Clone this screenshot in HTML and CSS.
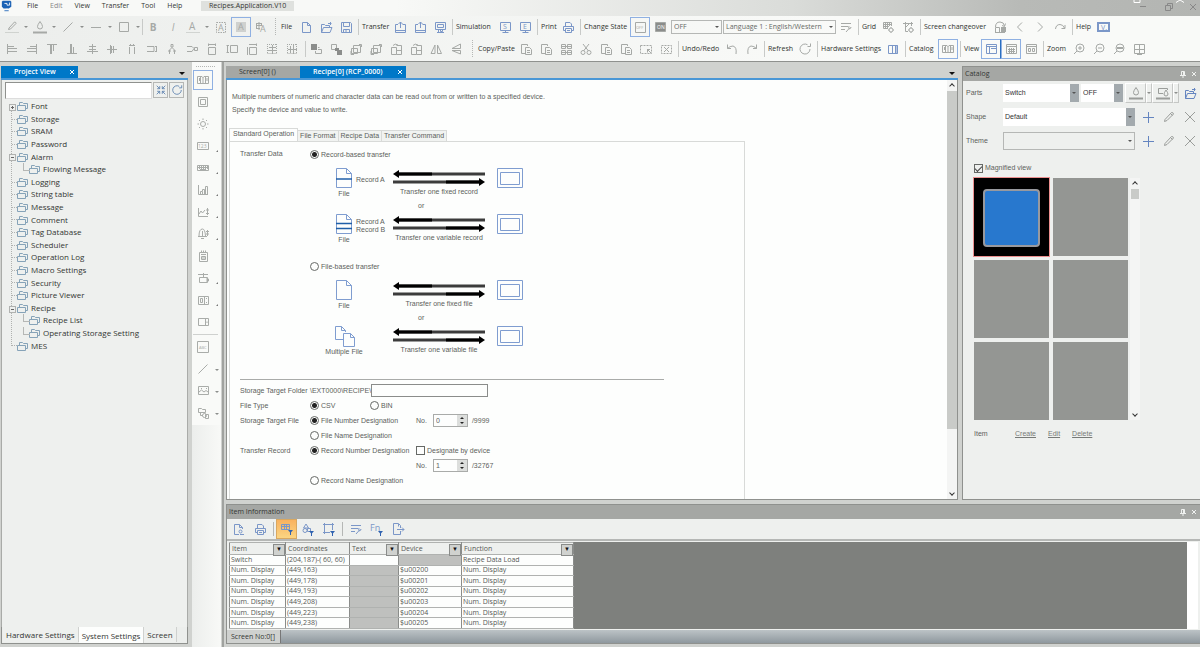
FILE: index.html
```
<!DOCTYPE html>
<html lang="en">
  <head>
    <meta charset="UTF-8" />
    <meta name="viewport" content="width=device-width, initial-scale=1.0" />
    <title>Recipes.Application.V10</title>
    <link rel="stylesheet" href="styles.css">
  </head>
  <body>
    <!-- icon sprite -->
    <svg class="sprite" aria-hidden="true">
      <symbol id="pencil" viewBox="0 0 14 14"><path d="M3 9.500L9.500 2.500Q11 2 11.500 4L5 10.500L2.500 11.500ZM8.500 3.500L10.500 5.500" /></symbol>
      <symbol id="pen" viewBox="0 0 14 14"><path d="M4 8L9.500 2Q11 2 11 3.500L5.500 9L3.500 9.500Z" /><path d="M0 12.500H14" opacity=".4" /></symbol>
      <symbol id="drop" viewBox="0 0 14 14"><path d="M7 1.500Q9.500 5 9.500 6.500Q9.500 9 7 9Q4.500 9 4.500 6.500Q4.500 5 7 1.500Z" /><path d="M-1 12.500H15" stroke-width="2" /></symbol>
      <symbol id="line" viewBox="0 0 14 14"><path d="M2.500 11.500L11.500 2.500" /></symbol>
      <symbol id="hline" viewBox="0 0 14 14"><path d="M2 7.500H12" /></symbol>
      <symbol id="square" viewBox="0 0 14 14"><path d="M2.500 2.500H11.500V11.500H2.500Z" /></symbol>
      <symbol id="font-a" viewBox="0 0 14 14"><text x="3" y="10" font-size="10">A</text><path d="M0 12.500H14" opacity=".4" /></symbol>
      <symbol id="dash-a" viewBox="0 0 14 14"><path d="M2.500 2.500H11.500V12.500H2.500Z" stroke-dasharray="1.500 1" /><text x="4" y="11" font-size="9">A</text></symbol>
      <symbol id="fill-a" viewBox="0 0 14 14"><path d="M2 2H12V12H2Z" fill="#cfd1cf" stroke="none" /><text x="4" y="10" font-size="9">A</text></symbol>
      <symbol id="lang-a" viewBox="0 0 14 14"><path d="M2 3.500H8M2 5.500H8M2 8.500H6M5 2V10M2.500 3V8M7.500 3V6" /><text x="6" y="12" font-size="9">A</text></symbol>
      <symbol id="page" viewBox="0 0 14 14"><path d="M3.500 2.500H8.500L11.500 5.500V12.500H3.500ZM8.500 2.500V5.500H11.500" /></symbol>
      <symbol id="open" viewBox="0 0 14 14"><path d="M2.500 12.500V4.500H5.500L6.500 5.500H10.500V7.500M2.500 12.500L4.500 7.500H13L11 12.500ZM9 3.500H12.500M11.500 2V5" /></symbol>
      <symbol id="save" viewBox="0 0 14 14"><path d="M2.500 2.500H11.500L12.500 3.500V12.500H2.500ZM4.500 2.500V6.500H10.500V2.500M4.500 12.500V9.500H10.500V12.500M7 10V12" /></symbol>
      <symbol id="pc-in" viewBox="0 0 14 14"><path d="M5 4.500H2.500V12.500H12.500V4.500H9.500M2.500 10.500H12.500M7.500 2V8M5.500 4L7.500 2L9.500 4" /></symbol>
      <symbol id="pc-link" viewBox="0 0 14 14"><path d="M2.500 2.500H12.500V9.500H2.500ZM4.500 4.500H10.500V7.500H4.500ZM5.500 9.500V12.500M7.500 9.500V11.500H9.500V9.500M4 12.500H11" /></symbol>
      <symbol id="sim" viewBox="0 0 14 14"><path d="M2.500 2.500H12.500V10.500H2.500ZM7.500 10.500V12.500M4.500 12.500H10.500" /><text x="5" y="9" font-size="7">S</text></symbol>
      <symbol id="emu" viewBox="0 0 14 14"><path d="M2.500 2.500H12.500V10.500H2.500ZM7.500 10.500V12.500M4.500 12.500H10.500" /><text x="5" y="9" font-size="7">E</text></symbol>
      <symbol id="print" viewBox="0 0 14 14"><path d="M4.500 6V2.500H9L10.500 4V6M4.500 10.500H2.500V6.500H12.500V10.500H10.500M4.500 8.500H10.500V12.500H4.500ZM6 10.500H9" /></symbol>
      <symbol id="off" viewBox="0 0 14 14"><path d="M2.500 2.500H12.500V12.500H2.500Z" /><text x="3" y="9" font-size="4">OFF</text></symbol>
      <symbol id="on" viewBox="0 0 14 14"><path d="M2.500 2.500H12.500V11.500H2.500Z" fill="#8b8d8b" /><text x="4" y="9" font-size="5" class="invert">ON</text></symbol>
      <symbol id="list-tool" viewBox="0 0 14 14"><path d="M2 3.500H12M2 6.500H9M2 9.500H6M7 12L11 7.500M10 6Q9 8 10.500 9Q12 8.500 12 7" /></symbol>
      <symbol id="grid-gear" viewBox="0 0 14 14"><path d="M2.500 2.500H10.500M2.500 4.500H10.500M2.500 6.500H8M2.500 8.500H7M2.500 2.500V8.500M4.500 2.500V8.500M6.500 2.500V8.500M8.500 2.500V6M10.500 2.500V6" /><circle cx="10" cy="10" r="2" /><path d="M10 7V13M7 10H13" stroke-dasharray="1 4" /></symbol>
      <symbol id="crop-gear" viewBox="0 0 14 14"><path d="M2 3.500H12M4.500 2V11.500H7M10.500 2V6M4.500 7.500L8 4" /><circle cx="10" cy="10" r="2" /><path d="M10 7V13M7 10H13" stroke-dasharray="1 4" /></symbol>
      <symbol id="changeover" viewBox="0 0 14 14"><path d="M2.500 7Q2.500 2 7 2Q11 2 11.500 6M12.500 3.500L11.500 6.500L9 5.500M2.500 7.500H6.500V12.500H2.500ZM2 12.500H12" /><path d="M8 7H13V12H8Z" fill="currentColor" stroke="none" /></symbol>
      <symbol id="prev" viewBox="0 0 14 14"><path d="M9 2.500L4.500 7L9 11.500" /></symbol>
      <symbol id="next" viewBox="0 0 14 14"><path d="M5 2.500L9.500 7L5 11.500" /></symbol>
      <symbol id="return" viewBox="0 0 14 14"><path d="M2.500 9Q3 4.500 7 4.500Q10 4.500 11.500 8M12 5V8.500H8.500" /></symbol>
      <symbol id="redo" viewBox="0 0 14 14"><path d="M3 12Q2 5 6 4Q9 4 11.500 6.500M11.500 2.500V6.500H8" /></symbol>
      <symbol id="undo" viewBox="0 0 14 14"><path d="M11 12Q12 5 8 4Q5 4 2.500 6.500M2.500 2.500V6.500H6" /></symbol>
      <symbol id="help" viewBox="0 0 14 14"><path d="M2 3H13V11H2Z" stroke-width="2" /><text x="5" y="10" font-size="7">V.</text></symbol>

      <symbol id="al-left" viewBox="0 0 14 14"><path d="M2.500 2V12M3 4.500H9M3 6.500H12M3 9.500H12" /></symbol>
      <symbol id="al-right" viewBox="0 0 14 14"><path d="M11.500 2V12M5 4.500H11M2 6.500H11M2 9.500H11" /></symbol>
      <symbol id="al-top" viewBox="0 0 14 14"><path d="M2 2.500H12M5.500 3V12M8.500 3V9M6.500 12V3" /></symbol>
      <symbol id="al-bottom" viewBox="0 0 14 14"><path d="M2 11.500H12M5.500 2V11M8.500 5V11M6.500 2V11" /></symbol>
      <symbol id="al-mid" viewBox="0 0 14 14"><path d="M7.500 2V12M4 4.500H11M2 9.500H13M4 7.500H11" /></symbol>
      <symbol id="al-center" viewBox="0 0 14 14"><path d="M2 7.500H12M5.500 3V12M8.500 4V11M6.500 4V11" /></symbol>
      <symbol id="dist" viewBox="0 0 14 14"><path d="M4.500 12V5M9.500 12V5M4 3.500H10M5.500 2V4M8.500 2V4" /></symbol>
      <symbol id="dist-h" viewBox="0 0 14 14"><path d="M2 4.500H9V9.500H2M11.500 4V10M10 4.500H12M10 9.500H12" /></symbol>
      <symbol id="dist-a" viewBox="0 0 14 14"><path d="M4.500 12V8L7 5.500L9.500 8V12M6 2.500H8V5H6ZM3 9H6M8 9H11" /></symbol>
      <symbol id="dist-b" viewBox="0 0 14 14"><path d="M2 4.500H7L9 6.500L7 9.500H2M9.500 5.500H12.500V8.500H9.500Z" /></symbol>
      <symbol id="size-w" viewBox="0 0 14 14"><path d="M3.500 5.500H10.500V12.500H3.500ZM3 2.500H11M3.500 1.500V4M10.500 1.500V4" /></symbol>
      <symbol id="size-h" viewBox="0 0 14 14"><path d="M5.500 3.500H12.500V10.500H5.500ZM2.500 3V11M1.500 3.500H4M1.500 10.500H4" /></symbol>
      <symbol id="size" viewBox="0 0 14 14"><path d="M4.500 5.500H11.500V12.500H4.500ZM4 2.500H12M2.500 5V13M11.500 1.500V4" /></symbol>
      <symbol id="snap" viewBox="0 0 14 14"><path d="M2 2.500H12M2.500 11.500H12M2.500 2V12M11.500 2V12" stroke-dasharray="1 1" /><path d="M7.500 3V12M4 5.500H11M3 8.500H12" /></symbol>
      <symbol id="snap-v" viewBox="0 0 14 14"><path d="M2 2.500H12M2.500 11.500H12M2.500 2V12M11.500 2V12" stroke-dasharray="1 1" /><path d="M3 7.500H12M5.500 4V11M8.500 3V12" /></symbol>
      <symbol id="front" viewBox="0 0 14 14"><path d="M2 2H8V8H2Z" fill="#8b8d8b" stroke="none" /><path d="M9 5.500H10.500M6.500 9V11.500H12.500V7.500H9" /></symbol>
      <symbol id="back" viewBox="0 0 14 14"><path d="M2.500 2.500H7.500V7.500H2.500Z" /><path d="M8 8H13V13H8ZM6 6H10V9H6Z" fill="#8b8d8b" stroke="none" /></symbol>
      <symbol id="group" viewBox="0 0 14 14"><path d="M4.500 3.500H11.500V10.500H4.500ZM2.500 6.500H8.500V11.500H2.500ZM10 2.500H12.500V5M2 9V12.500H5" /></symbol>
      <symbol id="rotate" viewBox="0 0 14 14"><path d="M2.500 5.500H7.500V12.500H2.500ZM7.500 3.500H12.500V12.500H7.500M7.500 8.500H12M4 3.500Q6 1 9 3" /></symbol>
      <symbol id="mirror" viewBox="0 0 14 14"><path d="M6 3V11.500H2ZM8.500 3V11.500H12.500Z" /></symbol>
      <symbol id="flip" viewBox="0 0 14 14"><path d="M11.500 2V6.500H3ZM11.500 12V8.500H3Z" /></symbol>
      <symbol id="copy" viewBox="0 0 14 14"><path d="M6 11.500H2.500V2.500H8.500V4M6.500 5.500H10.500L12.500 7.500V12.500H6.500ZM8 8.500H11M8 10.500H11" /></symbol>
      <symbol id="many" viewBox="0 0 14 14"><path d="M2.500 2.500H6.500V6.500H2.500ZM8.500 2.500H12.500V6.500H8.500ZM2.500 8.500H6.500V12.500H2.500ZM8.500 8.500H12.500V12.500H8.500ZM2.500 4.500H12.500M2.500 10.500H12.500" /></symbol>
      <symbol id="cut" viewBox="0 0 14 14"><path d="M4 2L9.500 9M10 2L4.500 9" /><circle cx="4" cy="10.500" r="2" /><circle cx="10" cy="10.500" r="2" /></symbol>
      <symbol id="select-box" viewBox="0 0 14 14"><path d="M1.500 3.500H12.500V11.500H1.500Z" stroke-dasharray="2 1" /><path d="M8 7L12 11M8.500 10.500V7.500H11" /></symbol>
      <symbol id="delete-box" viewBox="0 0 14 14"><path d="M2.500 3.500H12.500V11.500H2.500Z" stroke-dasharray="2 1" /><path d="M5 5L10 10M10 5L5 10" /></symbol>
      <symbol id="refresh" viewBox="0 0 14 14"><path d="M12 7A5 5 0 1 1 9.500 2.700M9.500 4.500H12.500V1.500" /></symbol>
      <symbol id="hw" viewBox="0 0 14 14"><path d="M2.500 3.500H11.500V11.500H2.500ZM6.500 3.500V11.500M9.500 3.500V11.500M11 3V12" /></symbol>
      <symbol id="book" viewBox="0 0 14 14"><path d="M1.500 3.500H6L7 4.500L8 3.500H12.500V10.500H1.500ZM7 4V11M4.500 4V10M3.500 5V8M9.500 4V10M11 5V8" /></symbol>
      <symbol id="view-a" viewBox="0 0 14 14"><path d="M2.500 2.500H12.500V11.500H2.500ZM2.500 4.500H12.500M5.500 4.500V11.500M7 6.500H12" /></symbol>
      <symbol id="view-b" viewBox="0 0 14 14"><path d="M2.500 2.500H12.500V11.500H2.500ZM2.500 4.500H12.500M4 7.500H11M4 9.500H11M5.500 6V11M7.500 6V11M9.500 6V11" /></symbol>
      <symbol id="view-c" viewBox="0 0 14 14"><path d="M2.500 2.500H12.500V11.500H2.500ZM2.500 4.500H12.500M4.500 6.500H6.500V9.500H4.500ZM8.500 6.500H10.500V9.500H8.500Z" /></symbol>
      <symbol id="zoom-in" viewBox="0 0 14 14"><circle cx="8" cy="6" r="4" /><path d="M5 9L2 12M6 6H10M8 4V8" /></symbol>
      <symbol id="zoom-out" viewBox="0 0 14 14"><circle cx="8" cy="6" r="4" /><path d="M5 9L2 12M6 6H10" /></symbol>
      <symbol id="zoom-100" viewBox="0 0 14 14"><circle cx="8" cy="6" r="4" /><path d="M5 9L2 12M5 5.500H11M5 6.500H11" /></symbol>
      <symbol id="fit" viewBox="0 0 14 14"><path d="M2.500 2.500H12.500V11.500H2.500ZM7.500 3V13M3 7.500H12M5 12.500H10" /></symbol>

      <symbol id="frame" viewBox="0 0 14 14"><path d="M2.500 2.500H11.500V11.500H2.500ZM4.500 4.500H9.500V9.500H4.500Z" /></symbol>
      <symbol id="lamp" viewBox="0 0 14 14"><circle cx="7" cy="7" r="2.500" /><path d="M7 1.500V3M7 11V12.500M1.500 7H3M11 7H12.500M3 3L4 4M10 10L11 11M11 3L10 4M3 11L4 10" /></symbol>
      <symbol id="digits" viewBox="0 0 14 14"><path d="M1.500 3.500H12.500V10.500H1.500Z" /><text x="2" y="9" font-size="5">123</text></symbol>
      <symbol id="keys" viewBox="0 0 14 14"><path d="M1.500 4.500H12.500V9.500H1.500ZM1.500 6.500H12.500M3.500 4.500V8M5.500 4.500V8M7.500 4.500V8M9.500 4.500V8M11.500 4.500V8M4 8.500H10" /></symbol>
      <symbol id="bars" viewBox="0 0 14 14"><path d="M2.500 2V11.500H12M4.500 11V8.500H6.500V11M6.500 8V6.500H8.500V11M9.500 11V3.500H11.500V11" /></symbol>
      <symbol id="trend" viewBox="0 0 14 14"><path d="M2.500 3V11.500H12M3 9L5 6L6.500 8L9 5M11.500 3V10M10 5H13M10 8.500H13" /></symbol>
      <symbol id="alarm" viewBox="0 0 14 14"><path d="M3 9Q3 2 6.500 2Q9 2 9.500 9M2 9.500H11M5 11.500H8M6.500 4V9M11.500 3V9M10 4.500H13M10 7H13" /></symbol>
      <symbol id="memo" viewBox="0 0 14 14"><path d="M3.500 3.500H11.500V12.500H3.500ZM5 5.500H10M5.500 7.500H9.500V10.500H5.500ZM5.500 9H9.500M5.500 1.500V4M7.500 1.500V4M9.500 1.500V4" /></symbol>
      <symbol id="slider" viewBox="0 0 14 14"><path d="M2 3.500H12M7.500 2V6M3.500 6.500H11.500V11.500H3.500ZM10 8H12.500V10H10" /></symbol>
      <symbol id="movie" viewBox="0 0 14 14"><path d="M2.500 3.500H12.500V11.500H2.500ZM8.500 3.500V11.500M4.500 5.500H6.500V9.500H4.500ZM10 5.500H11M10 9.500H11" /></symbol>
      <symbol id="panel" viewBox="0 0 14 14"><path d="M2.500 3.500H12.500V10.500H2.500ZM9.500 3.500V10.500M11 6.500V8" /></symbol>
      <symbol id="abc" viewBox="0 0 14 14"><path d="M1.500 1.500H12.500V12.500H1.500Z" /><text x="3" y="9" font-size="4">ABC</text></symbol>
      <symbol id="image" viewBox="0 0 14 14"><path d="M2.500 2.500H12.500V10.500H2.500ZM3 8L5.500 6L8 8L10 6.500L12 8M5 4.500H6M10 4.500H11" /></symbol>
      <symbol id="parts" viewBox="0 0 14 14"><path d="M2.500 2.500H5.500L6.500 3.500H9.500V6.500H2.500ZM4.500 6.500V9.500H7" /><circle cx="8.500" cy="9.500" r="2" /><path d="M9.500 8.500H12.500V12.500H9.500Z" /></symbol>

      <symbol id="folders" viewBox="0 0 14 14"><path d="M4.500 6V3.500H7.500L8.500 4.500H12.500V9.500H10.500M2.500 6.500H10.500V11.500H2.500Z" /></symbol>
      <symbol id="collapse" viewBox="0 0 14 14"><path d="M2 2L5.500 5.500M12 2L8.500 5.500M2 12L5.500 8.500M12 12L8.500 8.500M5.500 2.500V5.500H2.500M8.500 2.500V5.500H11.500M2.500 8.500H5.500V11.500M11.500 8.500H8.500V11.500" /></symbol>
      <symbol id="plus" viewBox="0 0 14 14"><path d="M7.500 2V13M2 7.500H13" /></symbol>
      <symbol id="cross" viewBox="0 0 14 14"><path d="M2 2L12 12M12 2L2 12" /></symbol>
      <symbol id="x" viewBox="0 0 8 8"><path d="M2 2L6 6M6 2L2 6" /></symbol>
      <symbol id="pin" viewBox="0 0 8 8"><path d="M2.500 5V1.500H5.500V5M1 5.500H7M4 5.500V8M4.500 2V5" /></symbol>
      <symbol id="drop-box" viewBox="0 0 14 14"><path d="M7 7.500H2.500V2.500H11.500V4M10 4Q12 7 12 8Q12 10 10 10Q8 10 8 8Q8 7 10 4Z" /><path d="M-1 12.500H15" stroke-width="2" /></symbol>
      <symbol id="preview" viewBox="0 0 14 14"><path d="M7 12.500H2.500V2.500H7.500L10.500 5.500V7M7.500 2.500V5.500H10.500M8 12.500H12" /><circle cx="8.500" cy="9.500" r="1.500" /></symbol>
      <symbol id="filter-grid" viewBox="0 0 14 14"><path d="M1.500 2.500H9.500V7.500H1.500ZM1.500 4.500H9.500M4.500 2.500V7.500M6.500 2.500V7.500" /><path d="M8 8H13L10.500 11ZM10 9H11V13H10Z" class="solid-mark" /></symbol>
      <symbol id="filter-shape" viewBox="0 0 14 14"><path d="M5 2L7.500 6H2.500ZM6.500 6.500H9.500V9.500H6.500Z" /><circle cx="4" cy="8.500" r="2" /><path d="M8 9H13L10.500 12ZM10 9H11V14H10Z" class="solid-mark" /></symbol>
      <symbol id="filter-frame" viewBox="0 0 14 14"><path d="M1 2.500H12M1 10.500H8M2.500 1V12M10.500 1V8" /><path d="M8 9H13L10.500 12ZM10 9H11V14H10Z" class="solid-mark" /></symbol>
      <symbol id="filter-fn" viewBox="0 0 14 14"><text x="0" y="9" font-size="9">Fn</text><path d="M8 9H13L10.500 12ZM10 9H11V14H10Z" class="solid-mark" /></symbol>
      <symbol id="export" viewBox="0 0 14 14"><path d="M9.500 9V12.500H2.500V1.500H7.500L9.500 3.500V6M7.500 2V4.500M6 7.500H13M11 5.500L13 7.500L11 9.500" /></symbol>

      <symbol id="doc" viewBox="0 0 18 20"><path d="M1.500.5H11.500L16.500 5.500V19.500H1.500ZM11.500.5V5.500H16.500" /></symbol>
      <symbol id="doc-1" viewBox="0 0 18 20"><path d="M1.500.5H11.500L16.500 5.500V19.500H1.500ZM11.500.5V5.500H16.500" /><path d="M1 11H17" stroke="#1f5fa8" stroke-width="1.500" /></symbol>
      <symbol id="doc-2" viewBox="0 0 18 20"><path d="M1.500.5H11.500L16.500 5.500V19.500H1.500ZM11.500.5V5.500H16.500" /><path d="M1 9.500H17M1 14.500H17" stroke="#1f5fa8" stroke-width="1.500" /></symbol>
      <symbol id="docs" viewBox="0 0 22 21"><path d="M9 13.500H1.500V.5H7.500L11.500 4.500V6M7.500.5V4.500H11.500M9.500 7.500H16.500L20.500 11.500V20.500H9.500ZM16.500 7.500V11.500H20.500" /></symbol>
      <symbol id="screen" viewBox="0 0 28 21"><path d="M1.500.5H26.500V19.500H1.500ZM4.500 4.500H23.500V16.500H4.500Z" /></symbol>
      <symbol id="arrows" viewBox="0 0 94 16">
        <path d="M6 2.500H93V5.500H6Z" fill="#3c3c3c" stroke="none" /><path d="M1 4L7 0V2.500H40V5.500H7V8Z" fill="#000" stroke="none" />
        <path d="M1 10.500H88V13.500H1Z" fill="#3c3c3c" stroke="none" /><path d="M93 12L87 8V10.500H54V13.500H87V16Z" fill="#000" stroke="none" />
      </symbol>
    </svg>

    <header class="titlebar">
      <svg class="logo" viewBox="0 0 14 14"><path d="M2 1H11L12 2V8L9 10H3L1 8V2Z" fill="#1c63b5" /><path d="M4 4H7V6H10V3M7 10V12M4 12H10" fill="none" stroke="#fff" /><path d="M4 12.500H9" stroke="#1c63b5" /></svg>
      <nav class="menu">
        <a href="#">File</a>
        <a href="#" class="dim">Edit</a>
        <a href="#">View</a>
        <a href="#">Transfer</a>
        <a href="#">Tool</a>
        <a href="#">Help</a>
      </nav>
      <span class="app-name">Recipes.Application.V10</span>
      <svg class="window-controls" viewBox="0 0 72 16">
        <path d="M6 0V2.500H12V0M48 2.500L52 0L56 2.500" stroke="#fff" />
        <path d="M12 6.500H18M37.500 5.500H42.500V10.500H37.500ZM39.500 5V3.500H44.500V8.500H43M62 4L68 10M68 4L62 10" stroke="#888" />
      </svg>
    </header>

    <div class="toolbars">
      <div class="toolbar toolbar-main">
        <div class="group">
          <button class="tool" aria-label="Line colour"><svg><use href="#pen" /></svg></button><button class="more" aria-label="More"></button>
          <button class="tool" aria-label="Fill colour"><svg><use href="#drop" /></svg></button><button class="more" aria-label="More"></button>
          <button class="tool" aria-label="Line"><svg><use href="#line" /></svg></button><button class="more" aria-label="More"></button>
          <button class="tool" aria-label="Line style"><svg><use href="#hline" /></svg></button><button class="more" aria-label="More"></button>
          <button class="tool" aria-label="Border"><svg><use href="#square" /></svg></button><button class="more" aria-label="More"></button>
        </div>
        <div class="group sep">
          <button class="tool bold">B</button>
          <button class="tool italic">I</button>
          <button class="tool" aria-label="Text colour"><svg><use href="#font-a" /></svg></button><button class="more" aria-label="More"></button>
          <button class="tool" aria-label="Text frame"><svg><use href="#dash-a" /></svg></button>
          <button class="tool active" aria-label="Text fill"><svg><use href="#fill-a" /></svg></button>
          <button class="tool" aria-label="Text language"><svg><use href="#lang-a" /></svg></button>
        </div>
        <div class="group grip blue">
          <span class="group-label">File</span>
          <button class="tool" aria-label="New"><svg><use href="#page" /></svg></button>
          <button class="tool" aria-label="Open"><svg><use href="#open" /></svg></button>
          <button class="tool" aria-label="Save"><svg><use href="#save" /></svg></button>
        </div>
        <div class="group sep blue">
          <span class="group-label">Transfer</span>
          <button class="tool" aria-label="Write"><svg><use href="#pc-in" /></svg></button>
          <button class="tool" aria-label="Read"><svg><use href="#pc-in" /></svg></button>
          <button class="tool" aria-label="Compare"><svg><use href="#pc-link" /></svg></button>
        </div>
        <div class="group sep blue">
          <span class="group-label">Simulation</span>
          <button class="tool" aria-label="Simulate"><svg><use href="#sim" /></svg></button>
          <button class="tool" aria-label="Emulate"><svg><use href="#emu" /></svg></button>
        </div>
        <div class="group sep blue">
          <span class="group-label">Print</span>
          <button class="tool" aria-label="Print"><svg><use href="#print" /></svg></button>
        </div>
        <div class="group sep">
          <span class="group-label">Change State</span>
          <button class="tool active" aria-label="Off"><svg><use href="#off" /></svg></button>
          <button class="tool" aria-label="On"><svg><use href="#on" /></svg></button>
          <span class="pick pick-state"><select aria-label="State"><option>OFF</option></select></span>
          <span class="pick pick-lang"><select aria-label="Language"><option>Language 1 : English/Western</option></select></span>
          <button class="tool" aria-label="Language list"><svg><use href="#list-tool" /></svg></button>
        </div>
        <div class="group sep">
          <span class="group-label">Grid</span>
          <button class="tool" aria-label="Grid settings"><svg><use href="#grid-gear" /></svg></button>
          <button class="tool" aria-label="Snap settings"><svg><use href="#crop-gear" /></svg></button>
        </div>
        <div class="group sep">
          <span class="group-label">Screen changeover</span>
          <button class="tool" aria-label="Change screen"><svg><use href="#changeover" /></svg></button>
          <button class="tool" aria-label="Previous"><svg><use href="#prev" /></svg></button>
          <button class="tool" aria-label="Next"><svg><use href="#next" /></svg></button>
          <button class="tool" aria-label="Return"><svg><use href="#return" /></svg></button>
        </div>
        <div class="group sep blue">
          <span class="group-label">Help</span>
          <button class="tool" aria-label="Help"><svg><use href="#help" /></svg></button>
        </div>
      </div>

      <div class="toolbar toolbar-edit">
        <div class="group">
          <button class="tool" aria-label="Align left"><svg><use href="#al-left" /></svg></button>
          <button class="tool" aria-label="Align right"><svg><use href="#al-right" /></svg></button>
          <button class="tool" aria-label="Align top"><svg><use href="#al-top" /></svg></button>
          <button class="tool" aria-label="Align bottom"><svg><use href="#al-bottom" /></svg></button>
          <button class="tool" aria-label="Align middle"><svg><use href="#al-mid" /></svg></button>
          <button class="tool" aria-label="Align centre"><svg><use href="#al-center" /></svg></button>
          <button class="tool" aria-label="Distribute columns"><svg><use href="#dist" /></svg></button>
          <button class="tool" aria-label="Distribute rows"><svg><use href="#dist-h" /></svg></button>
          <button class="tool" aria-label="Space columns"><svg><use href="#dist-a" /></svg></button>
          <button class="tool" aria-label="Space rows"><svg><use href="#dist-b" /></svg></button>
          <button class="tool" aria-label="Same width"><svg><use href="#size-w" /></svg></button>
          <button class="tool" aria-label="Same height"><svg><use href="#size-h" /></svg></button>
          <button class="tool" aria-label="Same size"><svg><use href="#size" /></svg></button>
          <button class="tool" aria-label="Centre horizontally"><svg><use href="#snap" /></svg></button>
          <button class="tool" aria-label="Centre vertically"><svg><use href="#snap-v" /></svg></button>
        </div>
        <div class="group sep">
          <button class="tool" aria-label="Bring to front"><svg><use href="#front" /></svg></button>
          <button class="tool" aria-label="Send to back"><svg><use href="#back" /></svg></button>
          <button class="tool" aria-label="Group"><svg><use href="#group" /></svg></button>
          <button class="tool" aria-label="Ungroup"><svg><use href="#group" /></svg></button>
          <button class="tool" aria-label="Rotate left"><svg><use href="#rotate" /></svg></button>
          <button class="tool" aria-label="Rotate right"><svg><use href="#rotate" /></svg></button>
          <button class="tool" aria-label="Mirror"><svg><use href="#mirror" /></svg></button>
          <button class="tool" aria-label="Flip"><svg><use href="#flip" /></svg></button>
        </div>
        <div class="group grip">
          <span class="group-label">Copy/Paste</span>
          <button class="tool" aria-label="Paste"><svg><use href="#copy" /></svg></button>
          <button class="tool" aria-label="Copy"><svg><use href="#copy" /></svg></button>
          <button class="tool" aria-label="Multiple copy"><svg><use href="#many" /></svg></button>
          <button class="tool" aria-label="Cut"><svg><use href="#cut" /></svg></button>
          <button class="tool" aria-label="Copy item"><svg><use href="#copy" /></svg></button>
          <button class="tool" aria-label="Paste item"><svg><use href="#copy" /></svg></button>
          <button class="tool" aria-label="Select"><svg><use href="#select-box" /></svg></button>
          <button class="tool" aria-label="Delete"><svg><use href="#delete-box" /></svg></button>
        </div>
        <div class="group sep">
          <span class="group-label">Undo/Redo</span>
          <button class="tool" aria-label="Undo"><svg><use href="#undo" /></svg></button>
          <button class="tool" aria-label="Redo"><svg><use href="#redo" /></svg></button>
        </div>
        <div class="group sep">
          <span class="group-label">Refresh</span>
          <button class="tool" aria-label="Refresh"><svg><use href="#refresh" /></svg></button>
        </div>
        <div class="group sep blue">
          <span class="group-label">Hardware Settings</span>
          <button class="tool" aria-label="Hardware settings"><svg><use href="#hw" /></svg></button>
        </div>
        <div class="group sep">
          <span class="group-label">Catalog</span>
          <button class="tool active" aria-label="Catalog"><svg><use href="#book" /></svg></button>
        </div>
        <div class="group sep">
          <span class="group-label">View</span>
          <button class="tool active on" aria-label="Project view"><svg><use href="#view-a" /></svg></button>
          <button class="tool active" aria-label="Item view"><svg><use href="#view-b" /></svg></button>
          <button class="tool" aria-label="List view"><svg><use href="#view-c" /></svg></button>
        </div>
        <div class="group sep">
          <span class="group-label">Zoom</span>
          <button class="tool" aria-label="Zoom in"><svg><use href="#zoom-in" /></svg></button>
          <button class="tool" aria-label="Zoom out"><svg><use href="#zoom-out" /></svg></button>
          <button class="tool" aria-label="Zoom 100%"><svg><use href="#zoom-100" /></svg></button>
          <button class="tool" aria-label="Fit"><svg><use href="#fit" /></svg></button>
        </div>
      </div>
    </div>

    <div class="workspace">
      <aside class="project">
        <div class="dock-tabs">
          <div class="dock-tab selected">Project View <svg class="tiny"><use href="#x" /></svg></div>
          <span class="dock-menu"></span>
        </div>
        <div class="project-body">
          <div class="search">
            <input type="text" aria-label="Search">
            <button aria-label="Collapse"><svg><use href="#collapse" /></svg></button>
            <button aria-label="Reload"><svg><use href="#refresh" /></svg></button>
          </div>
          <ul class="tree">
            <li class="plus"><svg><use href="#folders" /></svg>Font</li>
            <li><svg><use href="#folders" /></svg>Storage</li>
            <li><svg><use href="#folders" /></svg>SRAM</li>
            <li><svg><use href="#folders" /></svg>Password</li>
            <li class="minus"><svg><use href="#folders" /></svg>Alarm</li>
            <li class="child"><svg><use href="#folders" /></svg>Flowing Message</li>
            <li><svg><use href="#folders" /></svg>Logging</li>
            <li><svg><use href="#folders" /></svg>String table</li>
            <li><svg><use href="#folders" /></svg>Message</li>
            <li><svg><use href="#folders" /></svg>Comment</li>
            <li><svg><use href="#folders" /></svg>Tag Database</li>
            <li><svg><use href="#folders" /></svg>Scheduler</li>
            <li><svg><use href="#folders" /></svg>Operation Log</li>
            <li><svg><use href="#folders" /></svg>Macro Settings</li>
            <li><svg><use href="#folders" /></svg>Security</li>
            <li><svg><use href="#folders" /></svg>Picture Viewer</li>
            <li class="minus"><svg><use href="#folders" /></svg>Recipe</li>
            <li class="child"><svg><use href="#folders" /></svg>Recipe List</li>
            <li class="child"><svg><use href="#folders" /></svg>Operating Storage Setting</li>
            <li><svg><use href="#folders" /></svg>MES</li>
          </ul>
        </div>
        <div class="project-tabs">
          <button>Hardware Settings</button>
          <button class="selected">System Settings</button>
          <button>Screen</button>
        </div>
      </aside>

      <aside class="toolbox">
        <div class="toolbox-items">
          <button class="tool active" aria-label="Parts"><svg><use href="#book" /></svg></button>
          <button class="tool" aria-label="Switch"><svg><use href="#frame" /></svg></button>
          <button class="tool" aria-label="Lamp"><svg><use href="#lamp" /></svg></button>
          <button class="tool corner" aria-label="Data display"><svg><use href="#digits" /></svg></button>
          <button class="tool corner" aria-label="Keypad"><svg><use href="#keys" /></svg></button>
          <button class="tool corner" aria-label="Graph"><svg><use href="#bars" /></svg></button>
          <button class="tool corner" aria-label="Trend"><svg><use href="#trend" /></svg></button>
          <button class="tool corner" aria-label="Alarm"><svg><use href="#alarm" /></svg></button>
          <button class="tool" aria-label="Memo"><svg><use href="#memo" /></svg></button>
          <button class="tool corner" aria-label="Slider"><svg><use href="#slider" /></svg></button>
          <button class="tool corner" aria-label="Video"><svg><use href="#movie" /></svg></button>
          <button class="tool" aria-label="Other"><svg><use href="#panel" /></svg></button>
          <hr>
          <button class="tool" aria-label="Text"><svg><use href="#abc" /></svg></button>
          <button class="tool arrow" aria-label="Line"><svg><use href="#line" /></svg></button>
          <button class="tool arrow" aria-label="Image"><svg><use href="#image" /></svg></button>
          <button class="tool arrow" aria-label="Library"><svg><use href="#parts" /></svg></button>
        </div>
      </aside>

      <div class="main">
        <div class="upper">
          <section class="editor">
            <div class="dock-tabs">
              <div class="dock-tab">Screen[0] ()</div>
              <div class="dock-tab selected wide">Recipe[0] (RCP_0000) <svg class="tiny"><use href="#x" /></svg></div>
              <span class="dock-menu"></span>
            </div>
            <div class="editor-body">
              <form class="recipe">
                <p>Multiple numbers of numeric and character data can be read out from or written to a specified device.</p>
                <p>Specify the device and value to write.</p>
                <div class="recipe-tabs">
                  <button type="button" class="selected">Standard Operation</button>
                  <button type="button">File Format</button>
                  <button type="button">Recipe Data</button>
                  <button type="button">Transfer Command</button>
                </div>
                <div class="recipe-pane">
                  <div class="transfer">
                    <span>Transfer Data</span>
                    <div>
                      <label class="radio"><input type="radio" name="transfer" checked>Record-based transfer</label>
                      <div class="diagrams">
                        <div class="diagram">
                          <svg class="doc"><use href="#doc-1" /></svg><span class="note">Record A</span><span class="caption">File</span>
                          <svg class="arrows"><use href="#arrows" /></svg><span class="way">Transfer one fixed record</span>
                          <svg class="screen"><use href="#screen" /></svg>
                        </div>
                        <div class="or">or</div>
                        <div class="diagram">
                          <svg class="doc"><use href="#doc-2" /></svg><span class="note">Record A<br>Record B</span><span class="caption">File</span>
                          <svg class="arrows"><use href="#arrows" /></svg><span class="way">Transfer one variable record</span>
                          <svg class="screen"><use href="#screen" /></svg>
                        </div>
                      </div>
                      <label class="radio"><input type="radio" name="transfer">File-based transfer</label>
                      <div class="diagrams">
                        <div class="diagram">
                          <svg class="doc"><use href="#doc" /></svg><span class="caption">File</span>
                          <svg class="arrows"><use href="#arrows" /></svg><span class="way">Transfer one fixed file</span>
                          <svg class="screen"><use href="#screen" /></svg>
                        </div>
                        <div class="or">or</div>
                        <div class="diagram">
                          <svg class="docs"><use href="#docs" /></svg><span class="caption">Multiple File</span>
                          <svg class="arrows"><use href="#arrows" /></svg><span class="way">Transfer one variable file</span>
                          <svg class="screen"><use href="#screen" /></svg>
                        </div>
                      </div>
                    </div>
                  </div>
                  <hr>
                  <div class="fields">
                    <label for="folder">Storage Target Folder</label>
                    <span class="span">\EXT0000\RECIPE\<input type="text" id="folder"></span>

                    <span>File Type</span>
                    <span class="span">
                      <label class="radio first"><input type="radio" name="type" checked>CSV</label>
                      <label class="radio"><input type="radio" name="type">BIN</label>
                    </span>

                    <span>Storage Target File</span>
                    <label class="radio"><input type="radio" name="file" checked>File Number Designation</label>
                    <label class="number">No. <span class="spin"><input type="text" value="0"><i></i></span> /9999</label>

                    <label class="radio alone"><input type="radio" name="file">File Name Designation</label>

                    <span>Transfer Record</span>
                    <label class="radio"><input type="radio" name="record" checked>Record Number Designation</label>
                    <label class="check"><input type="checkbox">Designate by device</label>

                    <label class="number last">No. <span class="spin"><input type="text" value="1"><i></i></span> /32767</label>

                    <label class="radio alone"><input type="radio" name="record">Record Name Designation</label>
                  </div>
                </div>
              </form>
              <div class="scroll">
                <span class="chevron up"></span>
                <span class="thumb"></span>
                <span class="chevron down"></span>
              </div>
            </div>
          </section>

          <aside class="catalog">
            <div class="panel-title">Catalog <svg class="tiny"><use href="#pin" /></svg><svg class="tiny"><use href="#x" /></svg></div>
            <div class="catalog-body">
              <div class="catalog-row">
                <label for="parts-sel">Parts</label>
                <span class="pick solid grow"><select id="parts-sel"><option>Switch</option></select></span>
                <span class="pick solid state"><select aria-label="State"><option>OFF</option></select></span>
                <button class="tool raised" aria-label="Colour"><svg><use href="#drop" /></svg></button><button class="more raised" aria-label="More"></button>
                <button class="tool raised" aria-label="Frame colour"><svg><use href="#drop-box" /></svg></button><button class="more raised" aria-label="More"></button>
                <button class="tool blue" aria-label="Open"><svg><use href="#open" /></svg></button>
              </div>
              <div class="catalog-row">
                <label for="shape-sel">Shape</label>
                <span class="pick solid grow"><select id="shape-sel"><option>Default</option></select></span>
                <button class="tool blue" aria-label="Add"><svg><use href="#plus" /></svg></button>
                <button class="tool" aria-label="Edit"><svg><use href="#pencil" /></svg></button>
                <button class="tool" aria-label="Remove"><svg><use href="#cross" /></svg></button>
              </div>
              <div class="catalog-row">
                <label for="theme-sel">Theme</label>
                <span class="pick grow"><select id="theme-sel"><option></option></select></span>
                <button class="tool blue" aria-label="Add"><svg><use href="#plus" /></svg></button>
                <button class="tool" aria-label="Edit"><svg><use href="#pencil" /></svg></button>
                <button class="tool" aria-label="Remove"><svg><use href="#cross" /></svg></button>
              </div>
              <label class="check magnified"><input type="checkbox" checked>Magnified view</label>
              <div class="shapes">
                <div class="tiles">
                  <div class="tile current"><span></span></div>
                  <div class="tile"></div>
                  <div class="tile"></div>
                  <div class="tile"></div>
                  <div class="tile"></div>
                  <div class="tile"></div>
                </div>
                <div class="scroll small">
                  <span class="chevron up"></span>
                  <span class="thumb"></span>
                  <span class="chevron down"></span>
                </div>
              </div>
              <div class="item-links">
                <span>Item</span>
                <a href="#">Create</a>
                <a href="#">Edit</a>
                <a href="#">Delete</a>
              </div>
            </div>
          </aside>
        </div>

        <section class="info">
          <div class="panel-title">Item Information <svg class="tiny"><use href="#pin" /></svg><svg class="tiny"><use href="#x" /></svg></div>
          <div class="info-tools">
            <button class="tool" aria-label="Preview"><svg><use href="#preview" /></svg></button>
            <button class="tool" aria-label="Print"><svg><use href="#print" /></svg></button>
            <i></i>
            <button class="tool lit" aria-label="Filter items"><svg><use href="#filter-grid" /></svg></button>
            <button class="tool" aria-label="Filter shapes"><svg><use href="#filter-shape" /></svg></button>
            <button class="tool" aria-label="Filter frames"><svg><use href="#filter-frame" /></svg></button>
            <i></i>
            <button class="tool" aria-label="List settings"><svg><use href="#list-tool" /></svg></button>
            <button class="tool" aria-label="Filter functions"><svg><use href="#filter-fn" /></svg></button>
            <button class="tool" aria-label="Export"><svg><use href="#export" /></svg></button>
          </div>
          <div class="info-table">
            <table>
              <colgroup><col class="c-item"><col class="c-coord"><col class="c-text"><col class="c-device"><col class="c-func"></colgroup>
              <thead>
                <tr><th class="filter">Item</th><th>Coordinates</th><th class="filter">Text</th><th class="filter">Device</th><th class="filter">Function</th></tr>
              </thead>
              <tbody>
                <tr><td>Switch</td><td>(204,187)-( 60, 60)</td><td></td><td class="na"></td><td>Recipe Data Load</td></tr>
                <tr><td>Num. Display</td><td>(449,163)</td><td class="na"></td><td>$u00200</td><td>Num. Display</td></tr>
                <tr><td>Num. Display</td><td>(449,178)</td><td class="na"></td><td>$u00201</td><td>Num. Display</td></tr>
                <tr><td>Num. Display</td><td>(449,193)</td><td class="na"></td><td>$u00202</td><td>Num. Display</td></tr>
                <tr><td>Num. Display</td><td>(449,208)</td><td class="na"></td><td>$u00203</td><td>Num. Display</td></tr>
                <tr><td>Num. Display</td><td>(449,223)</td><td class="na"></td><td>$u00204</td><td>Num. Display</td></tr>
                <tr><td>Num. Display</td><td>(449,238)</td><td class="na"></td><td>$u00205</td><td>Num. Display</td></tr>
              </tbody>
            </table>
            <div class="info-empty"></div>
          </div>
          <div class="info-status"><button>Screen No:0[]</button></div>
        </section>
      </div>
    </div>
  </body>
</html>
```

FILE: styles.css
```
* {
  box-sizing: border-box;
}

body {
  display: flex;
  flex-direction: column;
  height: 100vh;
  margin: 0;
  overflow: hidden;
  background: #d0d2cf;
  color: #333633;
  font-family: "Open Sans", "Noto Sans", sans-serif;
  font-size: 8px;
  line-height: 10px;
}

button,
input,
select {
  margin: 0;
  padding: 0;
  border: 0;
  border-radius: 0;
  background: none;
  color: inherit;
  font: inherit;
}

svg {
  fill: none;
  stroke: currentColor;
}

svg text {
  fill: currentColor;
  stroke: none;
}

svg .invert {
  fill: #fff;
}

svg .solid-mark {
  fill: #2f62b0;
  stroke: none;
}

.sprite {
  display: none;
}

.tiny {
  width: 8px;
  height: 8px;
}

/* title bar */
.titlebar {
  display: flex;
  align-items: center;
  flex: none;
  height: 16px;
  padding-bottom: 4px;
  background: linear-gradient(90deg, #f8f9f7 33%, #dadcd9 66%, #b8bab7 85%, #b3b5b2);
}

.logo {
  width: 14px;
  height: 12px;
  stroke: none;
}

.menu {
  display: flex;
  gap: 12px;
  width: 187px;
  padding-left: 13px;
}

.menu a {
  color: #333633;
  font-size: 7px;
  text-decoration: none;
}

.menu .dim {
  color: #888;
}

.app-name {
  padding: 0 8px;
  background: #dfe1de;
  font-size: 7px;
}

.window-controls {
  width: 72px;
  height: 16px;
  margin-bottom: -4px;
  margin-left: auto;
}

/* toolbars */
.toolbars {
  flex: none;
  height: 46px;
  border-bottom: 1px solid #8f918e;
  background: linear-gradient(90deg, #eceeec, #f9faf8 70%);
}

.toolbar {
  display: grid;
  height: 22px;
}

.toolbar-main {
  grid-template-columns: 142px 130px 86px 94px 85px 43px 278px 62px 152px 43px;
}

.toolbar-edit {
  grid-template-columns: 305px 164px 209px 86px 53px 88px 55px 83px 108px;
}

.group {
  display: flex;
  align-items: center;
  padding: 0 2px;
  color: #a6a9a6;
}

.group.sep {
  padding-left: 1px;
  background: linear-gradient(#c8cac8, #c8cac8) left center / 1px 16px no-repeat;
}

.group.grip {
  padding-left: 6px;
  background: repeating-linear-gradient(#b5b7b5 0 1px, transparent 1px 2px) 3px center / 1px 18px no-repeat;
}

.group.blue {
  color: #7b97c8;
}

.group-label {
  flex: 1;
  width: 0;
  padding-left: 3px;
  color: #2f332f;
  font-size: 7px;
  white-space: nowrap;
}

.tool {
  display: flex;
  align-items: center;
  justify-content: center;
  flex: none;
  width: 20px;
  height: 20px;
}

.tool svg,
.search svg,
.tree svg {
  flex: none;
  width: 14px;
  height: 14px;
  overflow: visible;
}

.tool.active {
  border: 1px solid #8fb0e2;
}

.tool.on {
  border-right: 1px solid #2a6fc0;
  color: #7b97c8;
}

.bold {
  font-size: 10px;
  font-weight: bold;
}

.italic {
  font-size: 10px;
  font-style: italic;
}

.more {
  flex: none;
  width: 8px;
  height: 10px;
}

.more::before,
.dock-menu::before {
  display: block;
  width: 0;
  margin: auto;
  border: 2px solid transparent;
  border-top-color: #8c8e8c;
  border-bottom: 0;
  content: "";
}

.pick {
  position: relative;
  display: block;
  flex: none;
  height: 14px;
}

.pick::after {
  position: absolute;
  top: 6px;
  right: 3px;
  border: 2px solid transparent;
  border-top-color: #555;
  border-bottom: 0;
  content: "";
  pointer-events: none;
}

.pick select {
  width: 100%;
  height: 100%;
  padding-left: 2px;
  border: 1px solid #b5b7b5;
  appearance: none;
  color: #666966;
  font-size: 7px;
}

.pick-state {
  width: 51px;
  margin: 0 1px;
}

.pick-lang {
  width: 113px;
}

/* workspace */
.workspace {
  display: flex;
  flex: 1;
  min-height: 0;
}

.dock-tabs {
  display: flex;
  flex: none;
  height: 14px;
  border-bottom: 2px solid #4a97d6;
}

.dock-tab {
  display: flex;
  align-items: center;
  justify-content: space-between;
  padding: 0 2px 0 13px;
  background: #a5a7a4;
  font-size: 7px;
}

.dock-tab.selected {
  background: #0078c8;
  color: #fff;
  font-weight: 600;
}

.dock-menu {
  margin: 6px 3px 0 auto;
}

.dock-menu::before {
  border-width: 3px;
  border-bottom: 0;
  border-top-color: #111;
}

.project {
  display: flex;
  flex-direction: column;
  flex: none;
  width: 188px;
  padding: 4px 0 3px 1px;
}

.project .dock-tab {
  width: 77px;
}

.project-body {
  flex: 1;
  min-height: 0;
  padding: 2px 3px;
  border: solid #a9aba8;
  border-width: 0 1px;
  background: #eef0ee;
}

.search {
  display: flex;
  gap: 1px;
}

.search input {
  flex: 1;
  width: 0;
  height: 17px;
  border: 1px solid #8f918e;
  border-right-color: #ddd;
  border-bottom-color: #ddd;
  background: #fff;
}

.search button {
  display: flex;
  align-items: center;
  justify-content: center;
  width: 15px;
  height: 16px;
  border: 1px solid #b5b7b5;
  color: #5a80ad;
}

.search svg {
  width: 12px;
  height: 12px;
}

.tree {
  position: relative;
  display: grid;
  grid-template-rows: repeat(20, 1fr);
  height: 252px;
  margin: 1px 0 0;
  padding: 0;
  list-style: none;
}

.tree::before {
  position: absolute;
  top: 6px;
  bottom: 6px;
  left: 6px;
  border-left: 1px dotted #b0b2b0;
  content: "";
}

.tree li {
  position: relative;
  display: flex;
  align-items: center;
  gap: 2px;
  min-height: 0;
  padding-left: 10px;
}

.tree li::before {
  position: absolute;
  top: 6px;
  left: 7px;
  width: 5px;
  border-top: 1px dotted #b0b2b0;
  content: "";
}

.tree .child {
  padding-left: 22px;
}

.tree .child::before {
  top: 0;
  left: 18px;
  width: 6px;
  height: 7px;
  border-top: 0;
  border-bottom: 1px solid #b5b7b5;
  border-left: 1px solid #b5b7b5;
}

.tree .plus::before,
.tree .minus::before {
  z-index: 1;
  top: 4px;
  left: 4px;
  width: 5px;
  height: 5px;
  border: 1px solid #b0b2b0;
  background: linear-gradient(#666, #666) center / 3px 1px no-repeat, #eef0ee;
}

.tree .plus::before {
  background: linear-gradient(#666, #666) center / 3px 1px no-repeat, linear-gradient(#666, #666) center / 1px 3px no-repeat, #eef0ee;
}

.tree svg {
  margin: -2px 0;
  color: #86a3b8;
}

.project-tabs {
  display: flex;
  align-items: flex-start;
  flex: none;
  height: 17px;
  padding-left: 1px;
  border: solid #8f918e;
  border-width: 0 1px 1px;
  background: #eceeec;
}

.project-tabs button {
  height: 15px;
  padding: 0 3px;
  border-right: 1px solid #cfd1cf;
  background: #eef0ee;
}

.project-tabs .selected {
  height: 16px;
  padding-top: 1px;
  background: #fdfefd;
}

.toolbox {
  flex: none;
  width: 29px;
  margin-left: 4px;
  background: linear-gradient(90deg, #eceeec, #f8f9f7);
}

.toolbox-items {
  display: flex;
  flex-direction: column;
  gap: 2px;
  padding: 8px 2px 2px 1px;
  background: #f9faf8;
  color: #a9aca9;
}

.toolbox-items::before {
  height: 1px;
  margin: -4px 3px 1px;
  background: repeating-linear-gradient(90deg, #b5b7b5 0 1px, transparent 1px 2px);
  content: "";
}

.toolbox-items .tool {
  position: relative;
}

.toolbox hr {
  width: 25px;
  margin: 0;
  border: 0;
  border-top: 1px solid #cfd1cf;
}

.corner::after,
.arrow::after {
  position: absolute;
  right: -5px;
  bottom: 4px;
  border: 1px solid transparent;
  border-right-color: #777;
  border-bottom-color: #777;
  content: "";
}

.arrow::after {
  right: -6px;
  bottom: 8px;
  border: 2px solid transparent;
  border-top-color: #8c8e8c;
  border-bottom: 0;
}

.main {
  display: flex;
  flex-direction: column;
  flex: 1;
  min-width: 0;
  margin-left: 1px;
  padding: 4px 0 3px;
  border-left: 2px solid #a0a29f;
}

.upper {
  display: flex;
  flex: 1;
  gap: 4px;
  min-height: 0;
  padding-left: 2px;
}

.editor {
  display: flex;
  flex-direction: column;
  flex: 1;
  min-width: 0;
}

.editor .dock-tab {
  width: 74px;
}

.editor .dock-tab.wide {
  width: 106px;
}

.editor-body {
  display: flex;
  flex: 1;
  min-height: 0;
  border: 1px solid #8f918e;
  border-top: 0;
  background: #fdfefd;
}

.recipe {
  flex: 1;
  min-width: 0;
  padding: 13px 0 0 2px;
  overflow: hidden;
  color: #5c5f5c;
  font-family: "Liberation Sans", sans-serif;
  font-size: 7px;
  line-height: 8px;
}

.recipe p {
  margin: 0 0 5px 3px;
}

.recipe-tabs {
  display: flex;
  align-items: flex-end;
  padding-top: 9px;
}

.recipe-tabs button {
  height: 11px;
  padding: 0 2px;
  border: solid #d8dad8;
  border-width: 1px 1px 0 0;
  background: #f1f3f1;
}

.recipe-tabs .selected {
  height: 13px;
  padding: 0 3px 2px;
  border-left-width: 1px;
  background: #fdfefd;
}

.recipe-pane {
  width: 516px;
  padding: 8px 10px 20px;
  border: 1px solid #d8dad8;
}

.recipe-pane hr {
  width: 424px;
  margin: 23px 0 3px;
  border: 0;
  border-top: 1px solid #a9aba9;
}

.transfer {
  display: grid;
  grid-template-columns: 70px 1fr;
}

.radio,
.check {
  display: flex;
  align-items: center;
  gap: 2px;
  white-space: nowrap;
}

.radio input,
.check input {
  flex: none;
  width: 9px;
  height: 9px;
  border: 1px solid #666966;
  appearance: none;
}

.radio input {
  border-radius: 50%;
}

.radio input:checked {
  background: radial-gradient(circle, #222 2px, #fdfefd 3px);
}

.check input:checked::before {
  display: block;
  width: 6px;
  height: 3px;
  margin: 1px 0 0;
  border: solid #444;
  border-width: 0 0 1px 1px;
  content: "";
  transform: rotate(-45deg);
}

.transfer .radio {
  height: 9px;
}

.diagrams {
  padding: 9px 0 18px;
}

.diagrams:last-child {
  padding-bottom: 0;
}

.diagram {
  display: grid;
  grid-template-rows: 20px 10px;
  grid-template-columns: 24px 36px 94px 38px;
  height: 30px;
  padding-left: 22px;
}

.diagram svg {
  grid-row: 1;
  color: #7f9dd0;
}

.doc {
  grid-column: 1;
  justify-self: center;
  width: 18px;
  height: 20px;
}

.docs {
  grid-column: 1;
  justify-self: end;
  width: 22px;
  height: 21px;
}

.note {
  grid-row: 1;
  grid-column: 2;
  align-self: center;
  padding-top: 3px;
  white-space: nowrap;
}

.caption {
  grid-row: 2;
  grid-column: 1;
  align-self: end;
  justify-self: center;
  white-space: nowrap;
}

.arrows {
  grid-column: 3;
  align-self: center;
  width: 94px;
  height: 16px;
}

.way {
  grid-row: 2;
  grid-column: 3;
  justify-self: center;
  white-space: nowrap;
}

.screen {
  grid-column: 4;
  justify-self: end;
  width: 28px;
  height: 21px;
}

.or {
  height: 16px;
  padding: 4px 0 0 108px;
}

.fields {
  display: grid;
  grid-template-columns: 70px 106px 1fr;
  grid-auto-rows: 15px;
  align-items: center;
  white-space: nowrap;
}

.fields .span {
  display: flex;
  grid-column: 2 / 4;
}

.fields .first {
  width: 60px;
}

.fields .alone {
  grid-column: 2 / 4;
}

.fields .last {
  grid-column: 3;
}

.span {
  align-items: center;
}

.span #folder {
  width: 117px;
  height: 13px;
  border: 1px solid #8a8c8a;
}

.number {
  display: flex;
  align-items: center;
  gap: 4px;
}

.spin {
  display: flex;
  width: 35px;
  height: 13px;
  margin-left: 2px;
  border: 1px solid #a9aba9;
}

.spin input {
  flex: 1;
  width: 0;
  padding-left: 2px;
}

.spin i {
  display: flex;
  flex-direction: column;
  align-items: center;
  justify-content: center;
  gap: 3px;
  width: 10px;
  background: #dcdedc;
}

.spin i::before,
.spin i::after {
  border: 2px solid transparent;
  border-top: 0;
  border-bottom-color: #222;
  content: "";
}

.spin i::after {
  border-top: 2px solid #222;
  border-bottom: 0;
}

.scroll {
  display: flex;
  flex-direction: column;
  align-items: center;
  justify-content: space-between;
  flex: none;
  width: 10px;
  background: #f4f5f4;
}

.scroll .thumb {
  width: 10px;
  height: 338px;
  margin-bottom: auto;
  background: #c9cbc8;
}

.chevron {
  width: 4px;
  height: 4px;
  margin: 4px 0 3px;
  border: solid #333;
  border-width: 1px 0 0 1px;
  transform: rotate(45deg);
}

.chevron.down {
  margin: 3px 0 4px;
  transform: rotate(225deg);
}

.scroll.small .thumb {
  width: 8px;
  height: 10px;
}

/* catalog */
.panel-title {
  display: flex;
  align-items: center;
  gap: 3px;
  flex: none;
  height: 14px;
  padding: 0 2px;
  background: #a5a7a4;
  font-size: 7px;
}

.panel-title .tiny {
  color: #f0f2f0;
}

.panel-title .tiny:first-of-type {
  margin-left: auto;
}

.catalog {
  display: flex;
  flex-direction: column;
  flex: none;
  width: 238px;
  border: solid #8f918e;
  border-width: 1px 0 1px 1px;
}

.catalog-body {
  flex: 1;
  padding: 0 0 0 3px;
  background: #eef0ee;
  color: #5c5f5c;
  font-family: "Liberation Sans", sans-serif;
  font-size: 7px;
}

.catalog-row {
  display: flex;
  align-items: center;
  height: 24px;
}

.catalog-row label {
  width: 37px;
}

.catalog-row .pick {
  height: 18px;
}

.catalog-row .pick::after {
  top: 8px;
}

.catalog-row .grow {
  flex: 1;
  margin-right: 2px;
}

.catalog-row .state {
  width: 42px;
  margin-right: 2px;
}

.solid select {
  border: 0;
  background: linear-gradient(#a3aaae, #a3aaae) right / 9px 100% no-repeat, #fff;
  color: #333;
}

.catalog-row .tool {
  width: 21px;
  color: #9a9d9a;
}

.catalog-row .tool.blue {
  color: #6485c0;
}

.catalog-row .raised {
  border: 1px solid #c5c7c5;
  border-top-color: #fff;
  border-left-color: #fff;
}

.catalog-row .more.raised {
  width: 6px;
  height: 20px;
}

.magnified {
  margin: 10px 0 0 8px;
}

.shapes {
  display: flex;
  margin: 5px 0 0 8px;
}

.tiles {
  display: grid;
  grid-template-columns: 75px 75px;
  grid-auto-rows: 78px;
  gap: 4px;
}

.tile {
  background: #949693;
}

.tile.current {
  padding: 11px 9px 9px;
  outline: 1px solid #ec8f8f;
  background: #000;
}

.tile.current span {
  display: block;
  height: 58px;
  border: 2px solid #98999e;
  border-radius: 4px;
  background: #2878ce;
}

.scroll.small {
  margin-left: 2px;
}

.item-links {
  display: flex;
  margin: 9px 0 0 8px;
}

.item-links span {
  width: 41px;
}

.item-links a {
  margin-right: 12px;
  color: #777a77;
}

/* item information */
.info {
  flex: none;
  margin-top: 4px;
  margin-left: 2px;
  border: solid #8f918e;
  border-width: 1px 0 1px 1px;
  background: #eef0ee;
}

.info-tools {
  display: flex;
  align-items: center;
  height: 22px;
  padding-left: 1px;
  border-bottom: 2px solid #b5b7b5;
  color: #7b97c8;
}

.info-tools .tool {
  width: 21px;
}

.info-tools i {
  width: 1px;
  height: 14px;
  margin: 0 2px 0 3px;
  background: #b5b7b5;
}

.info-tools .lit {
  border: 1px solid #d9a860;
  background: linear-gradient(#f9b25f, #fbd582);
}

.info-table {
  display: flex;
  height: 89px;
  padding: 1px 1px 1px 2px;
}

table {
  width: 344px;
  height: 87px;
  border-collapse: collapse;
  background: #fdfefd;
  color: #555855;
  font-size: 7px;
  line-height: 8px;
  table-layout: fixed;
}

.c-item {
  width: 56px;
}

.c-coord {
  width: 64px;
}

.c-text {
  width: 49px;
}

.c-device {
  width: 63px;
}

.c-func {
  width: 112px;
}

th,
td {
  padding: 0 1px;
  border: 1px solid #b0b2b0;
  border-left-color: #8a8c8a;
  border-right-color: #8a8c8a;
  font-weight: normal;
  text-align: left;
  white-space: nowrap;
}

th {
  height: 12px;
  padding-left: 2px;
  background: #eef0ee;
}

.filter {
  position: relative;
}

.filter::after {
  position: absolute;
  top: 1px;
  right: 0;
  width: 10px;
  height: 10px;
  border: 1px solid #8a8c8a;
  background: #d0d2cf;
  color: #111;
  font-size: 6px;
  line-height: 8px;
  text-align: center;
  content: "\25BC";
}

.na {
  background: #bfc0be;
}

.info-empty {
  flex: 1;
  margin-right: 12px;
  background: #7e807d;
  box-shadow: 11px 0 #fff;
}

.info-status {
  height: 13px;
  background: linear-gradient(#bcc3c6, #8f989e);
}

.info-status button {
  height: 13px;
  padding: 0 5px 0 4px;
  border-right: 1px solid #777;
  background: #cfd1cf;
  font-size: 7px;
}
```
